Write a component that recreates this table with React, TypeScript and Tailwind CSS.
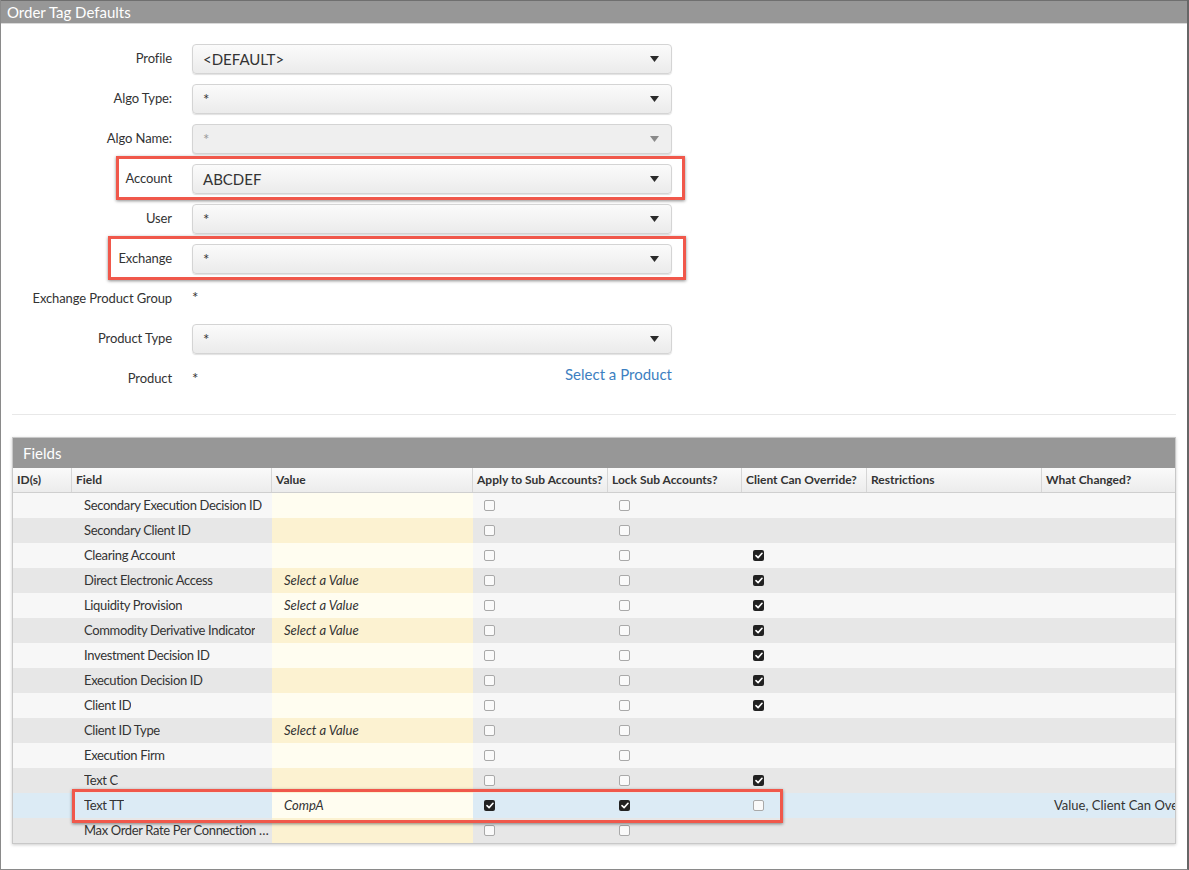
import React from 'react';

type Row = {
  field: string;
  value?: string;
  apply: boolean;
  lock: boolean;
  client: boolean | null;
  changed?: string;
  selected?: boolean;
};

const rows: Row[] = [
  { field: 'Secondary Execution Decision ID', apply: false, lock: false, client: null },
  { field: 'Secondary Client ID', apply: false, lock: false, client: null },
  { field: 'Clearing Account', apply: false, lock: false, client: true },
  { field: 'Direct Electronic Access', value: 'Select a Value', apply: false, lock: false, client: true },
  { field: 'Liquidity Provision', value: 'Select a Value', apply: false, lock: false, client: true },
  { field: 'Commodity Derivative Indicator', value: 'Select a Value', apply: false, lock: false, client: true },
  { field: 'Investment Decision ID', apply: false, lock: false, client: true },
  { field: 'Execution Decision ID', apply: false, lock: false, client: true },
  { field: 'Client ID', apply: false, lock: false, client: true },
  { field: 'Client ID Type', value: 'Select a Value', apply: false, lock: false, client: null },
  { field: 'Execution Firm', apply: false, lock: false, client: null },
  { field: 'Text C', apply: false, lock: false, client: true },
  { field: 'Text TT', value: 'CompA', apply: true, lock: true, client: false, changed: 'Value, Client Can Override', selected: true },
  { field: 'Max Order Rate Per Connection Per Second', apply: false, lock: false, client: null },
];

function Caret({ muted }: { muted?: boolean }) {
  return (
    <svg width="9" height="6" viewBox="0 0 9 6" className="shrink-0">
      <path d="M0 0 L9 0 L4.5 6 Z" fill={muted ? '#8a8a8a' : '#2b2b2b'} />
    </svg>
  );
}

function Select({ value, disabled }: { value: string; disabled?: boolean }) {
  return (
    <div
      className={`w-[480px] h-[30px] rounded-[4px] border border-[#d4d4d4] shadow-[0_1px_1px_rgba(0,0,0,0.12)] flex items-center pl-[10px] pr-[12px] ${
        disabled ? 'bg-[#efefef] text-[#999]' : 'bg-gradient-to-b from-[#fbfbfb] to-[#ebebeb] text-[#333]'
      }`}
    >
      <span className="flex-1 text-[15px] leading-none">{value}</span>
      <Caret muted={disabled} />
    </div>
  );
}

function FormRow({ label, children, box }: { label: string; children: React.ReactNode; box?: 'account' | 'exchange' }) {
  return (
    <div className="relative h-[40px] flex items-center">
      {box === 'account' && (
        <div className="absolute left-[115px] top-[-3px] w-[569px] h-[44px] border-[3px] border-[#f0584b] shadow-[0_1px_3px_rgba(0,0,0,0.45)]" />
      )}
      {box === 'exchange' && (
        <div className="absolute left-[107px] top-[-3px] w-[578px] h-[44px] border-[3px] border-[#f0584b] shadow-[0_1px_3px_rgba(0,0,0,0.45)]" />
      )}
      <div className="w-[171px] text-right text-[13px] text-[#333] shrink-0 tracking-[-0.1px]">{label}</div>
      <div className="ml-[20px] relative">{children}</div>
    </div>
  );
}

function Check({ checked }: { checked: boolean }) {
  if (checked) {
    return (
      <span className="w-[11px] h-[11px] rounded-[2px] bg-[#222] flex items-center justify-center">
        <svg width="8" height="7" viewBox="0 0 8 7">
          <path d="M1 3.6 L3.1 5.6 L7 1.3" stroke="#fff" strokeWidth="1.6" fill="none" strokeLinecap="round" strokeLinejoin="round" />
        </svg>
      </span>
    );
  }
  return <span className="w-[11px] h-[11px] rounded-[2px] border border-[#a9a9a9] bg-[#fafafa] block" />;
}

const cols = ['w-[59px]', 'w-[200px]', 'w-[201px]', 'w-[135px]', 'w-[134px]', 'w-[125px]', 'w-[175px]', 'w-[136px]'];
const headers = ['ID(s)', 'Field', 'Value', 'Apply to Sub Accounts?', 'Lock Sub Accounts?', 'Client Can Override?', 'Restrictions', 'What Changed?'];

export default function App() {
  return (
    <div className="w-[1189px] h-[870px] bg-white font-['Lato',sans-serif] text-[#333]">
      <div className="w-full h-full border-x border-b border-[#8a8a8a] border-r-[2px] border-r-[#666] flex flex-col">
        {/* title */}
        <div className="h-[24px] bg-[#979797] border-t border-[#6f6f6f] border-b border-b-[#d9d9d9] flex items-center px-[6px] text-white text-[15px] shrink-0">
          Order Tag Defaults
        </div>

        {/* form */}
        <div className="pt-[15px]">
          <FormRow label="Profile"><Select value="<DEFAULT>" /></FormRow>
          <FormRow label="Algo Type:"><Select value="*" /></FormRow>
          <FormRow label="Algo Name:"><Select value="*" disabled /></FormRow>
          <FormRow label="Account" box="account"><Select value="ABCDEF" /></FormRow>
          <FormRow label="User"><Select value="*" /></FormRow>
          <FormRow label="Exchange" box="exchange"><Select value="*" /></FormRow>
          <FormRow label="Exchange Product Group">
            <span className="text-[15px] relative top-[-2px]">*</span>
          </FormRow>
          <FormRow label="Product Type"><Select value="*" /></FormRow>
          <FormRow label="Product">
            <div className="w-[480px] flex items-start justify-between">
              <span className="text-[15px] relative top-[-1px]">*</span>
              <span className="text-[15px] text-[#3d7fc1] relative top-[-5px]">Select a Product</span>
            </div>
          </FormRow>
        </div>

        <div className="mx-[11px] mt-[15px] border-t border-[#e8e8e8]" />

        {/* fields table */}
        <div className="mx-[11px] mt-[22px] border border-[#c8c8c8] shadow-[0_1px_3px_rgba(0,0,0,0.2)] overflow-hidden">
          <div className="h-[30px] bg-[#979797] text-white text-[15px] flex items-center px-[10px]">Fields</div>
          <div className="flex h-[25px] bg-gradient-to-b from-[#fafafa] to-[#ececec] border-b border-[#cfcfcf]">
            {headers.map((h, i) => (
              <div
                key={h}
                className={`${cols[i]} shrink-0 flex items-center pl-[4px] text-[12px] font-bold text-[#333] whitespace-nowrap ${
                  i < headers.length - 1 ? 'border-r border-[#d6d6d6]' : ''
                }`}
              >
                {h}
              </div>
            ))}
          </div>
          {rows.map((r, i) => {
            const odd = i % 2 === 0;
            const bg = r.selected ? 'bg-[#dcebf5]' : odd ? 'bg-[#f7f7f7]' : 'bg-[#e7e7e7]';
            const valBg = r.selected || odd ? 'bg-[#fffdf0]' : 'bg-[#fcf2d1]';
            return (
              <div key={r.field} className={`relative flex h-[25px] text-[13px] ${bg}`}>
                {r.selected && (
                  <div className="absolute left-[59px] top-[-4px] w-[711px] h-[34px] border-[3px] border-[#f0584b] shadow-[0_1px_3px_rgba(0,0,0,0.45)] z-10" />
                )}
                <div className={`${cols[0]} shrink-0`} />
                <div className={`${cols[1]} shrink-0 flex items-center pl-[12px] pr-[2px] whitespace-nowrap overflow-hidden tracking-[-0.35px]`}>
                  <span className="truncate">{r.field}</span>
                </div>
                <div className={`${cols[2]} shrink-0 flex items-center pl-[12px] italic ${valBg}`}>{r.value}</div>
                <div className={`${cols[3]} shrink-0 flex items-center pl-[11px]`}><Check checked={r.apply} /></div>
                <div className={`${cols[4]} shrink-0 flex items-center pl-[11px]`}><Check checked={r.lock} /></div>
                <div className={`${cols[5]} shrink-0 flex items-center pl-[11px]`}>
                  {r.client !== null && <Check checked={r.client} />}
                </div>
                <div className={`${cols[6]} shrink-0`} />
                <div className={`${cols[7]} shrink-0 flex items-center pl-[12px] whitespace-nowrap overflow-hidden`}>
                  {r.changed}
                </div>
              </div>
            );
          })}
        </div>
      </div>
    </div>
  );
}
